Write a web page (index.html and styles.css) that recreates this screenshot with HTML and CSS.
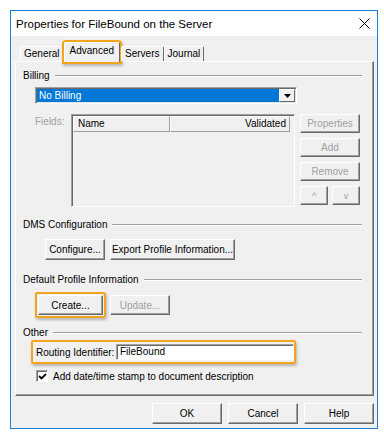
FILE: index.html
```html
<!DOCTYPE html>
<html>
<head>
    <title>Properties for FileBound on the Server</title>
    <link rel="stylesheet" href="styles.css">
</head>
<body>
<div class="window">
    <div class="titlebar">
        <span class="title">Properties for FileBound on the Server</span>
        <svg class="close" width="11" height="11" viewBox="0 0 11 11"><path d="M0.5 0.5 L10.5 10.5 M10.5 0.5 L0.5 10.5" stroke="#000" stroke-width="1" fill="none"/></svg>
    </div>

    <div class="tabs">
        <div class="tab">General</div>
        <div class="tab active">Advanced</div>
        <div class="tab">Servers</div>
        <div class="tab">Journal</div>
    </div>

    <div class="panel">
        <!-- Billing -->
        <div class="group-head"><span>Billing</span><i class="rule"></i></div>
        <div class="combo">
            <span class="combo-value">No Billing</span>
            <span class="combo-btn"><svg width="7" height="4" viewBox="0 0 7 4"><path d="M0 0 H7 L3.5 4 Z" fill="#000"/></svg></span>
        </div>
        <div class="fields">
            <span class="fields-label">Fields:</span>
            <div class="listbox">
                <div class="list-head">
                    <span class="col-name">Name</span>
                    <span class="col-valid">Validated</span>
                </div>
            </div>
            <div class="side-buttons">
                <button class="btn" disabled>Properties</button>
                <button class="btn" disabled>Add</button>
                <button class="btn" disabled>Remove</button>
                <div class="arrows">
                    <button class="btn" disabled>^</button>
                    <button class="btn" disabled>v</button>
                </div>
            </div>
        </div>

        <!-- DMS -->
        <div class="group-head gap-dms"><span>DMS Configuration</span><i class="rule"></i></div>
        <div class="btn-row dms-row">
            <button class="btn w-configure">Configure...</button>
            <button class="btn w-export">Export Profile Information...</button>
        </div>

        <!-- Default profile -->
        <div class="group-head gap-profile"><span>Default Profile Information</span><i class="rule"></i></div>
        <div class="btn-row profile-row">
            <span class="mark mark-create"><button class="btn w-create">Create...</button></span>
            <button class="btn w-update" disabled>Update...</button>
        </div>

        <!-- Other -->
        <div class="group-head gap-other"><span>Other</span><i class="rule"></i></div>
        <div class="mark routing">
            <span class="routing-label">Routing Identifier:</span>
            <span class="textbox">FileBound</span>
        </div>
        <div class="check-row">
            <span class="checkbox"><svg width="9" height="9" viewBox="0 0 9 9"><path d="M1 4 L3.5 6.5 L8 2" stroke="#000" stroke-width="1.8" fill="none"/></svg></span>
            <span>Add date/time stamp to document description</span>
        </div>
    </div>

    <div class="footer">
        <button class="btn w-footer">OK</button>
        <button class="btn w-footer">Cancel</button>
        <button class="btn w-footer">Help</button>
    </div>
</div>
</body>
</html>
```

FILE: styles.css
```css
:root {
    --face: #f0f0f0;
    --shadow: #a0a0a0;
    --dark: #696969;
    --light: #ffffff;
    --mark: #f2a51c;
    --select: #0078d7;
    --disabled: #a0a0a0;
}

body {
    margin: 0;
    background: #fff;
    font-family: "Liberation Sans", Arial, sans-serif;
    font-size: 10px;
    color: #000;
}

/* --- WINDOW --- */
.window {
    margin: 10px 0 0 10px;
    width: 368px;
    height: 419px;
    box-sizing: border-box;
    border: 1px solid #1c7fd6;
    background: var(--face);
    display: flex;
    flex-direction: column;
}

.titlebar {
    height: 25px;
    flex: none;
    background: #fff;
    display: flex;
    align-items: center;
    justify-content: space-between;
    padding: 0 7px 0 5px;
    font-size: 11.5px;
}
.close { display: block; }

/* --- TABS --- */
.tabs {
    display: flex;
    align-items: flex-end;
    height: 18px;
    flex: none;
    margin: 7px 0 0 9px;
    position: relative;
    z-index: 1;
}
.tab {
    height: 15px;
    box-sizing: border-box;
    padding: 0 3px;
    line-height: 13px;
    border: 1px solid;
    border-color: var(--light) var(--dark) transparent var(--light);
    border-bottom: none;
    border-radius: 2px 2px 0 0;
    background: var(--face);
}
.tab.active {
    height: 20px;
    margin: 0 1px -1px 0;
    padding: 0 5px;
    line-height: 15px;
    box-shadow: 0 0 0 2px var(--mark), 1px 2px 3px 2px rgba(0, 0, 0, 0.25);
}

.panel {
    flex: none;
    height: 335px;
    margin: 0 3px 0 4px;
    box-sizing: border-box;
    border: 1px solid;
    border-color: var(--light) var(--dark) var(--dark) var(--light);
    box-shadow: inset -1px -1px 0 var(--shadow);
    padding: 8px 11px 0 7px;
}

/* --- GROUP HEADINGS --- */
.group-head {
    display: flex;
    align-items: center;
    gap: 5px;
    height: 12px;
    line-height: 12px;
}
.rule {
    flex: 1;
    border-top: 1px solid var(--shadow);
    border-bottom: 1px solid var(--light);
}
.gap-dms { margin-top: 12px; }
.gap-profile { margin-top: 14px; }
.gap-other { margin-top: 9px; }

/* --- BILLING --- */
.combo {
    display: flex;
    margin: 5px 0 0 12px;
    width: 262px;
    height: 17px;
    box-sizing: border-box;
    border: 1px solid;
    border-color: var(--shadow) var(--light) var(--light) var(--shadow);
    box-shadow: inset 1px 1px 0 var(--dark), inset -1px -1px 0 #e3e3e3;
    padding: 1px;
    background: #fff;
}
.combo-value {
    flex: 1;
    background: var(--select);
    color: #fff;
    padding-left: 2px;
    line-height: 13px;
}
.combo-btn {
    width: 16px;
    box-sizing: border-box;
    border: 1px solid;
    border-color: var(--light) var(--dark) var(--dark) var(--light);
    background: var(--face);
    display: flex;
    align-items: center;
    justify-content: center;
}
.combo-btn svg { display: block; }

.fields {
    display: flex;
    margin-top: 10px;
    height: 93px;
}
.fields-label {
    width: 36px;
    margin-left: 12px;
    color: var(--disabled);
    line-height: 12px;
    padding-top: 2px;
}
.listbox {
    width: 224px;
    box-sizing: border-box;
    border: 1px solid;
    border-color: var(--shadow) var(--light) var(--light) var(--shadow);
    box-shadow: inset 1px 1px 0 var(--dark);
    padding: 1px 0 0 1px;
}
.list-head {
    display: flex;
    height: 16px;
}
.list-head span {
    box-sizing: border-box;
    border: 1px solid;
    border-color: var(--light) var(--shadow) var(--shadow) var(--light);
    line-height: 14px;
}
.col-name { width: 97px; padding-left: 4px; }
.col-valid { width: 120px; text-align: right; padding-right: 3px; }

.side-buttons {
    margin-left: 5px;
    width: 60px;
    display: flex;
    flex-direction: column;
    gap: 5px;
}
.side-buttons .btn { height: 19px; }
.arrows { display: flex; justify-content: space-between; }
.arrows .btn { width: 28px; font-size: 9px; }

/* --- BUTTONS --- */
.btn {
    height: 21px;
    box-sizing: border-box;
    border: 1px solid;
    border-color: var(--light) var(--dark) var(--dark) var(--light);
    box-shadow: inset -1px -1px 0 var(--shadow);
    background: var(--face);
    font: inherit;
    color: #000;
    padding: 0;
}
.btn:disabled { color: var(--disabled); }

.btn-row { display: flex; align-items: center; }
.dms-row { margin: 8px 0 0 22px; gap: 5px; }
.profile-row { margin: 6px 0 0 12px; gap: 4px; }
.w-configure { width: 60px; }
.w-export { width: 125px; }
.w-create { width: 65px; height: 20px; display: block; }
.w-update { width: 60px; height: 20px; }

/* orange call-outs drawn round controls */
.mark {
    border: 2px solid var(--mark);
    border-radius: 2px;
    box-shadow: 1px 2px 3px rgba(0, 0, 0, 0.25);
}
.mark-create { padding: 1px; }

/* --- OTHER --- */
.routing {
    display: flex;
    align-items: center;
    margin: 1px 0 0 8px;
    width: 265px;
    height: 24px;
    box-sizing: border-box;
    padding-left: 3px;
}
.routing-label { width: 80px; }
.textbox {
    width: 178px;
    height: 16px;
    box-sizing: border-box;
    border: 1px solid;
    border-color: var(--shadow) var(--light) var(--light) var(--shadow);
    box-shadow: inset 1px 1px 0 var(--dark);
    background: #fff;
    padding-left: 3px;
    line-height: 14px;
}

.check-row {
    display: flex;
    align-items: center;
    gap: 5px;
    margin: 6px 0 0 13px;
}
.checkbox {
    width: 12px;
    height: 12px;
    box-sizing: border-box;
    border: 1px solid;
    border-color: var(--shadow) var(--light) var(--light) var(--shadow);
    box-shadow: inset 1px 1px 0 var(--dark);
    background: #fff;
    display: flex;
    align-items: center;
    justify-content: center;
}
.checkbox svg { display: block; }

/* --- FOOTER --- */
.footer {
    display: flex;
    justify-content: flex-end;
    gap: 6px;
    margin-top: 7px;
    padding-right: 3px;
}
.w-footer { width: 70px; }
```
